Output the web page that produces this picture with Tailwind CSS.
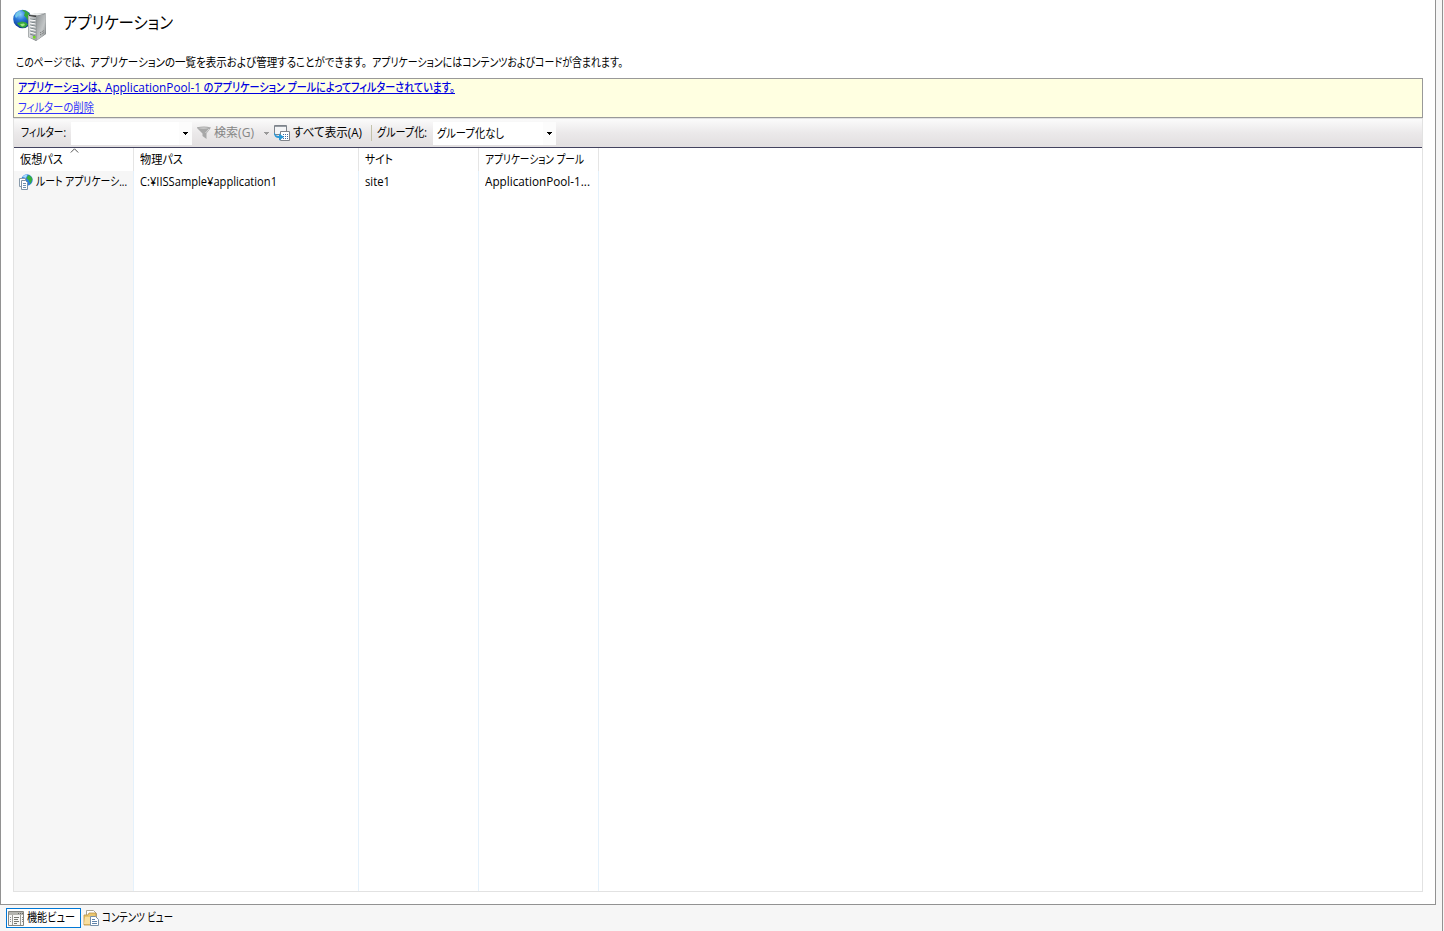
<!DOCTYPE html>
<html lang="ja">
<head>
<meta charset="utf-8">
<title>アプリケーション</title>
<script src="https://cdn.jsdelivr.net/npm/@tailwindcss/browser@4"></script>
</head>
<body class="w-[1444px] h-[931px] overflow-hidden bg-[#f6f6f6] font-['Open_Sans','Noto_Sans_CJK_JP',sans-serif] text-[12px] leading-[16px] text-black">
<div class="flex h-[931px] w-[1443px] flex-col border-r border-[#929292]">
  <main class="flex h-[905px] w-[1436px] flex-col border-x border-b border-[#929292] bg-white pl-3 pr-3">
    <header class="flex h-[46px] shrink-0 items-start">
      <svg class="mt-[8px] h-[35px] w-[35px] shrink-0" viewBox="0 0 35 35">
        <defs>
          <radialGradient id="g" cx=".38" cy=".25" r=".8"><stop offset="0" stop-color="#8fd0ff"/><stop offset=".4" stop-color="#2a78d8"/><stop offset="1" stop-color="#082a88"/></radialGradient>
          <linearGradient id="s" x1="0" x2="1"><stop offset="0" stop-color="#dcdfe0"/><stop offset="1" stop-color="#9ea3a5"/></linearGradient>
          <linearGradient id="t" x1="0" x2="1" y2="1"><stop offset="0" stop-color="#8d9294"/><stop offset=".6" stop-color="#c3c6c7"/><stop offset="1" stop-color="#85898b"/></linearGradient>
        </defs>
        <circle cx="9.500" cy="11" r="9.300" fill="url(#g)"/>
        <path d="M9 2q3-.5 5 1.500 4 3 4 7l-3 2-2-3-2-2 1-3zM4 15l5-1.500 4 1 2 2-3 3q-5 1-8-4.500z" fill="#37a83c"/>
        <path d="M2 8q1-4 5-5l1 2-3 3-2 2z" fill="#74c8e8"/>
        <path d="M7 16l4-.5 1 1.500-3 1.500z" fill="#a5e58a"/>
        <path d="M15 7l8-1.500 9.500-.5.500 21-10 7-8-4z" fill="#777c7e"/>
        <path d="M16 6.500l7-1.500 9.500.500-8 2z" fill="#eef0f0"/>
        <path d="M15.500 7l8 1v24.500l-8-3.500z" fill="url(#s)"/>
        <path d="M23.500 8l9-2v20l-9 6.500z" fill="url(#t)"/>
        <path d="M16 7.500l7 .8" stroke="#333" stroke-width="1.200"/>
        <path d="M17 11l5.500.7M17 14l5.500 1M17 17l5.500 1.200M17 20l5.500 1.400M17 23l5.500 1.600M17 26l5.500 2" stroke="#7a8488"/>
        <path d="M17 12l5.500.7M17 15l5.500 1M17 18l5.500 1.200M17 21l5.500 1.400M17 24l5.500 1.600" stroke="#fff"/>
        <rect x="20" y="28" width="2.500" height="2.500" fill="#72da20"/>
        <path d="M27 25l4-2.500M27 27l4-2.500" stroke="#666" stroke-dasharray="1 1"/>
      </svg>
      <h1 class="ml-[15px] mt-[11px] flex h-6 items-center text-[17px] leading-6"><span data-w="110">アプリケーション</span></h1>
    </header>
    <p class="mt-[9px] ml-[3px] flex h-4 shrink-0 items-center"><span data-w="70">このページでは、</span><span class="ml-[4px]" data-w="277">アプリケーションの一覧を表示および管理することができます。</span><span class="ml-[5px]" data-w="251">アプリケーションにはコンテンツおよびコードが含まれます。</span></p>
    <section class="mt-[7px] flex h-[40px] w-[1410px] shrink-0 flex-col border border-[#999] bg-[#ffffe1] pl-1">
      <a class="mt-px flex h-4 items-center font-medium text-[#0000e0] [&_span]:underline [&_span]:underline-offset-[1px]"><span data-w="87">アプリケーションは、&nbsp;</span><span data-w="96">ApplicationPool-1</span><span data-w="254">&nbsp;のアプリケーション プールによってフィルターされています。</span></a>
      <a class="mt-[4px] flex h-4 items-center text-[#3333ff] [&_span]:underline [&_span]:underline-offset-[1px]"><span data-w="76">フィルターの削除</span></a>
    </section>
    <section class="flex h-[774px] w-[1410px] flex-col border border-[#e2e2e2]">
      <div class="flex h-[29px] shrink-0 items-center border-b border-[#43435f] bg-linear-to-b from-[#fbfbfb] via-[#ebe9ea] to-[#e2dfe0] pl-[7px]">
        <span data-w="45">フィルター:</span>
        <div class="ml-[5px] flex h-[23px] w-[121px] justify-end bg-white">
          <div class="flex w-[13px] items-center justify-center bg-[#fcfcfc]"><svg class="h-[3px] w-[5px]" viewBox="0 0 5 3" shape-rendering="crispEdges"><path d="M0 0h5v1H4v1H3v1H2V2H1V1H0z"/></svg></div>
        </div>
        <svg class="ml-[5px] h-[14px] w-[14px]" viewBox="0 0 14 14"><path d="M-.5 1.500Q7-.5 14 1.500L9.500 7.500V13L5.500 10V7.500z" fill="#a8a8a8"/><path d="M1 2q6-1.500 11 0Q7 4 1 2z" fill="#c6c6c6"/><path d="M8.500 7l3.500-4" stroke="#d8d8d8"/></svg>
        <span class="ml-[3px] flex text-[#858585]"><span data-w="40">検索(G)</span></span>
        <svg class="ml-[10px] h-[3px] w-[5px]" viewBox="0 0 5 3" shape-rendering="crispEdges"><path d="M0 0h5v1H4v1H3v1H2V2H1V1H0z" fill="#999"/></svg>
        <svg class="ml-[5px] h-4 w-4" viewBox="0 0 16 16"><path d="M.5.500h12v9H.5z" fill="#f4f5f7" stroke="#7d838b"/><path d="M1 1.500h11" stroke="#969ba2"/><path d="M6.500 6.500h9v9h-9z" fill="#fff" stroke="#80848b"/><path d="M9 9.500h5M9 11.500h5M9 13.500h5" stroke="#496c9e" stroke-dasharray="1 1"/><path d="M1 8q0 3 4 3V8.500L10 12l-5 3.500V13Q0 13 0 8z" fill="#2998d8"/></svg>
        <span class="ml-[3px]" data-w="69">すべて表示(A)</span>
        <div class="ml-[9px] h-[16px] w-px bg-[#c3c2aa]"></div>
        <span class="ml-[5px]" data-w="50">グループ化:</span>
        <div class="ml-[6px] flex h-[23px] w-[123px] items-center bg-white pl-1">
          <span class="mt-[2px]" data-w="67">グループ化なし</span>
          <div class="ml-auto flex h-full w-[13px] items-center justify-center bg-[#fcfcfc]"><svg class="h-[3px] w-[5px]" viewBox="0 0 5 3" shape-rendering="crispEdges"><path d="M0 0h5v1H4v1H3v1H2V2H1V1H0z"/></svg></div>
        </div>
      </div>
      <div class="flex min-h-0 flex-1">
        <div class="flex w-[120px] flex-col">
          <div class="relative flex h-[23px] items-center border-r border-[#e5e5e5] pl-[6px]"><span data-w="43">仮想パス</span>
            <svg class="absolute left-[56px] top-0 h-[5px] w-[9px]" viewBox="0 0 9 5"><path d="M.8 4.500L4.500.8l3.700 3.700" fill="none" stroke="#555"/></svg>
          </div>
          <div class="flex-1 border-r border-[#e5f1fb] bg-[#f6f6f6] pl-[4px]">
            <div class="flex h-[22px] items-center">
              <svg class="-mt-px h-4 w-4" viewBox="0 0 16 16"><circle cx="9" cy="6" r="5.700" fill="#2f7fdc"/><path d="M4.500 3q2-3 5-2.500L8 4z" fill="#a9dcff"/><path d="M10.500 1q3 1 4 4l-2 5-2-4-2-2z" fill="#37b03c"/><path d="M1.500 4.500h6v8h-6z" fill="#fff" stroke="#8a9cac"/><path d="M3.500 6.500h4l2 2v7h-6z" fill="#fff" stroke="#7c91a5"/><path d="M5 9.500h3M5 11.500h3M5 13.500h3" stroke="#7090b0"/></svg>
              <span class="ml-[2px]" data-w="91">ルート アプリケーシ...</span>
            </div>
          </div>
        </div>
        <div class="flex w-[225px] flex-col">
          <div class="flex h-[23px] items-center border-r border-[#e5e5e5] pl-[6px]"><span data-w="43">物理パス</span></div>
          <div class="flex-1 border-r border-[#e5f1fb] pl-[6px]"><div class="flex h-[22px] items-center"><span data-w="137">C:¥IISSample¥application1</span></div></div>
        </div>
        <div class="flex w-[120px] flex-col">
          <div class="flex h-[23px] items-center border-r border-[#e5e5e5] pl-[6px]"><span data-w="28">サイト</span></div>
          <div class="flex-1 border-r border-[#e5f1fb] pl-[6px]"><div class="flex h-[22px] items-center"><span data-w="25">site1</span></div></div>
        </div>
        <div class="flex w-[120px] flex-col">
          <div class="flex h-[23px] items-center border-r border-[#e5e5e5] pl-[6px]"><span data-w="99">アプリケーション プール</span></div>
          <div class="flex-1 border-r border-[#e5f1fb] pl-[6px]"><div class="flex h-[22px] items-center"><span data-w="105">ApplicationPool-1...</span></div></div>
        </div>
      </div>
    </section>
  </main>
  <footer class="flex h-[26px] items-center pl-[6px]">
    <div class="flex h-[20px] w-[75px] items-center border border-[#0078d7] bg-white pl-px">
      <svg class="h-[15px] w-4" viewBox="0 0 16 15"><path d="M.5.500h15v14H.5z" fill="#f8f8f6" stroke="#85857f"/><path d="M1 2.500h14" stroke="#b4b4ae" stroke-width="3"/><path d="M10 2.500h5" stroke="#666" stroke-dasharray="1 1"/><path d="M4.500 4v10M12.500 4v10" stroke="#9b9b96"/><path d="M2 6.500h1M2 8.500h1M2 10.500h1M14 6.500h1M14 8.500h1M14 10.500h1" stroke="#888"/><path d="M6 6.500h5M6 8.500h4M6 10.500h5M6 12.500h3" stroke="#77776f"/></svg>
      <span class="ml-[3px]" data-w="48">機能ビュー</span>
    </div>
    <svg class="ml-[2px] h-4 w-4" viewBox="0 0 16 16"><path d="M3.500.500h7l3 3V10h-10z" fill="#fff" stroke="#a9a294"/><path d="M1 5h4l1-2h7v12H1z" fill="#eac66e" stroke="#bc9344" stroke-width=".8"/><path d="M2 7h6v7H1z" fill="#f8dfa0"/><path d="M7.500 6.500h5l3 3v6h-8z" fill="#fff" stroke="#7690aa"/><path d="M9 9.500h3M9 11.500h5M9 13.500h5" stroke="#5e83aa"/></svg>
    <span class="ml-[3px]" data-w="71">コンテンツ ビュー</span>
  </footer>
</div>
<script>
// Condense each label horizontally to its declared width, with proportional kana.
var fit = new ResizeObserver(function (entries) {
  entries.forEach(function (e) {
    var inner = e.target, n = e.contentRect.width;
    if (n) inner.style.transform = 'scaleX(' + inner.parentNode.dataset.w / n + ')';
  });
});
document.querySelectorAll('[data-w]').forEach(function (el) {
  var inner = document.createElement('span');
  inner.className = "block w-max origin-left whitespace-nowrap [font-feature-settings:'palt']";
  inner.textContent = el.textContent;
  el.textContent = '';
  el.appendChild(inner);
  el.classList.add('block', 'shrink-0');
  el.style.width = el.dataset.w + 'px';
  fit.observe(inner);
});
</script>
</body>
</html>
